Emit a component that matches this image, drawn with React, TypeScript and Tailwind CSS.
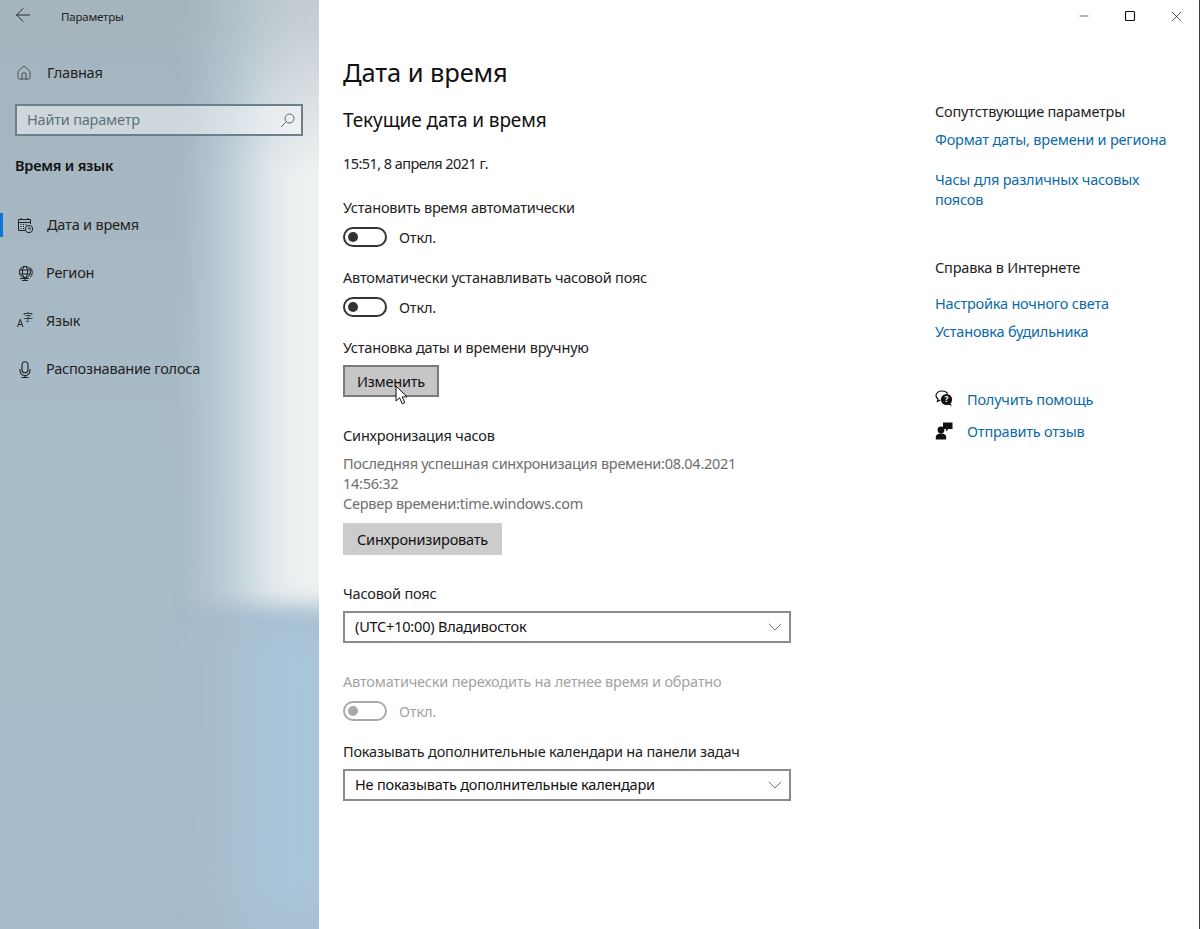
import { ArrowLeft, ChevronDown, Home, Minus, Square, X } from "lucide-react";

const font = "font-['Noto_Sans','Liberation_Sans',sans-serif]";

function Toggle({ disabled = false }: { disabled?: boolean }) {
  return (
    <div className="flex items-center gap-3 h-5">
      <div className={`w-11 h-5 rounded-full border-2 flex items-center pl-[3px] ${disabled ? "border-[#a9a9a9]" : "border-[#333]"}`}>
        <div className={`w-2.5 h-2.5 rounded-full ${disabled ? "bg-[#a9a9a9]" : "bg-[#333]"}`} />
      </div>
      <span className={`text-[14.5px] leading-5 tracking-[-0.2px] ${disabled ? "text-[#a3a3a3]" : "text-[#222]"}`}>Откл.</span>
    </div>
  );
}

function Select({ value }: { value: string }) {
  return (
    <div className="mt-2 w-[448px] h-8 border-2 border-[#8a8a8a] flex items-center justify-between pl-2.5 pr-0.5 text-[#111]">
      <span>{value}</span>
      <ChevronDown size={24} strokeWidth={0.8} className="text-[#555]" />
    </div>
  );
}

function SearchIcon() {
  return (
    <svg width="15" height="15" viewBox="0 0 15 15" fill="none" stroke="#55656e" strokeWidth="1">
      <circle cx="9.5" cy="5.5" r="4.5" />
      <path d="M6.2 8.8L1 14" />
    </svg>
  );
}

function CalendarIcon() {
  return (
    <svg width="17" height="17" viewBox="0 0 17 17" fill="none" stroke="#222" strokeWidth="1">
      <path d="M8 13.5H1.5V2.5h12V7M1.5 5.5h12M4 1v2M11 1v2" />
      <path d="M3.5 7.5h1M6 7.5h1M8.5 7.5h1M3.5 9.5h1M6 9.5h1M3.5 11.5h1M6 11.5h1" />
      <circle cx="12" cy="12" r="3.7" />
      <path d="M12 9.8V12h2" />
    </svg>
  );
}

function GlobeIcon() {
  return (
    <svg width="17" height="17" viewBox="0 0 17 17" fill="none" stroke="#222" strokeWidth="1">
      <circle cx="8" cy="7" r="5.6" />
      <ellipse cx="8" cy="7" rx="2.6" ry="5.6" />
      <path d="M2.6 5h10.8M2.6 9h10.8M13.2 2.5a7 7 0 0 1 0 10M3 13.5h9M8 13v2.5M5 15.5h6" />
    </svg>
  );
}

function LangIcon() {
  return (
    <div className="relative w-[17px] h-[17px] text-[#222] font-normal">
      <span className="absolute left-0 bottom-[2px] text-[10px] leading-[10px]">A</span>
      <span className="absolute left-[6px] -top-[1px] text-[10px] leading-[10px] font-['Noto_Sans_CJK_SC']">字</span>
    </div>
  );
}

function MicIcon() {
  return (
    <svg width="17" height="17" viewBox="0 0 17 17" fill="none" stroke="#222" strokeWidth="1.1">
      <rect x="5" y="0.8" width="6" height="11" rx="3" />
      <path d="M3 8v1.5a5 5 0 0 0 10 0V8M8 14.5v2M4.5 16.5h7" />
    </svg>
  );
}

function HelpIcon() {
  return (
    <svg width="18" height="18" viewBox="0 0 18 18">
      <path d="M7 1C3.4 1 1 3.1 1 5.6c0 1.4.8 2.6 2 3.4L2.4 11.4 5.6 10" fill="none" stroke="#111" strokeWidth="1.2" />
      <path d="M7 1c2.6 0 4.6 1 5.6 2.6" fill="none" stroke="#111" strokeWidth="1.2" />
      <circle cx="11.5" cy="9.5" r="5.6" fill="#111" />
      <path d="M15 13l2 3-4-1.4z" fill="#111" />
      <text x="11.5" y="12.4" textAnchor="middle" fontSize="8.5" fontWeight="700" fill="#fff">?</text>
    </svg>
  );
}

function FeedbackIcon() {
  return (
    <svg width="18" height="18" viewBox="0 0 18 18" fill="#111">
      <path d="M8 0.5h9.5V7H13.5L11 9.5V7H8z" />
      <circle cx="6" cy="8" r="3.4" />
      <path d="M0.8 17.5v-2.5c0-2.4 2-3.6 5.2-3.6s5.2 1.2 5.2 3.6v2.5z" />
    </svg>
  );
}

const navItems = [
  { label: "Дата и время", icon: <CalendarIcon />, active: true },
  { label: "Регион", icon: <GlobeIcon /> },
  { label: "Язык", icon: <LangIcon /> },
  { label: "Распознавание голоса", icon: <MicIcon /> },
];

function Sidebar() {
  return (
    <aside className="relative w-[319px] shrink-0 h-full overflow-hidden bg-[linear-gradient(180deg,#a5b4bd_0%,#a8bbc8_45%,#a7bccb_100%)]">
      {/* blurred wallpaper glow */}
      <div className="absolute left-[240px] top-[610px] w-[120px] h-[320px] bg-[#a9c5da] blur-[30px]" />
      <div className="absolute left-[170px] -top-[40px] w-[220px] h-[760px] [mask-image:linear-gradient(to_bottom,rgba(0,0,0,0.35),rgba(0,0,0,0.45)_9%,rgba(0,0,0,0.7)_18%,black_28%)]">
        <div className="h-[645px] bg-[linear-gradient(to_right,transparent_5%,#bccfd8_28%,#dfe7ea_44%,#eef1f1_60%)] blur-[10px]" />
      </div>

      <div className="relative flex flex-col">
        <div className="h-8 flex items-center pl-3">
          <ArrowLeft size={22} strokeWidth={0.9} className="text-[#111] -mt-[2px]" />
          <span className="ml-[27px] mt-[2px] text-[11.5px] text-[#222]">Параметры</span>
        </div>
        <div className="mt-[25px] h-8 flex items-center pl-4 text-[#222]">
          <Home size={16} strokeWidth={1} />
          <span className="ml-[15px]">Главная</span>
        </div>
        <div className="mt-[15px] ml-[15px] w-[288px] h-8 border-2 border-[#6d7f8a] bg-white/45 flex items-center justify-between pl-2.5 pr-[6px] text-[#5f6f78]">
          <span>Найти параметр</span>
          <SearchIcon />
        </div>
        <div className="mt-[19px] pl-[15px] leading-5 h-5 font-semibold text-[#111]">Время и язык</div>
        <div className="mt-[26px] flex flex-col">
          {navItems.map((item) => (
            <div key={item.label} className="relative h-12 flex items-center pl-[17px] text-[#222]">
              {item.active && <div className="absolute left-0 top-3 w-[3px] h-6 bg-[#0a78d4]" />}
              {item.icon}
              <span className={item.active ? "ml-[13px]" : "ml-3"}>{item.label}</span>
            </div>
          ))}
        </div>
      </div>
    </aside>
  );
}

function Main() {
  return (
    <main className="w-[616px] pl-6 pt-[52px] shrink-0 flex flex-col text-[#222]">
      <h1 className="text-[25.5px] leading-10 tracking-[-0.1px] text-[#111]">Дата и время</h1>
      <h2 className="mt-3.5 text-[19px] leading-7 tracking-[-0.1px] text-[#111]">Текущие дата и время</h2>
      <div className="mt-[19px] leading-5 tracking-[-0.55px]">15:51, 8 апреля 2021 г.</div>

      <div className="mt-6 leading-5">Установить время автоматически</div>
      <div className="mt-2.5"><Toggle /></div>

      <div className="mt-5 leading-5">Автоматически устанавливать часовой пояс</div>
      <div className="mt-2.5"><Toggle /></div>

      <div className="mt-5 leading-5">Установка даты и времени вручную</div>
      <button className="mt-2 w-24 h-8 pt-0.5 bg-[#c6c6c6] border-2 border-[#7a7a7a] text-[#111]">Изменить</button>

      <div className="mt-7 leading-5">Синхронизация часов</div>
      <div className="mt-2 w-[420px] leading-5 tracking-[-0.27px] text-[#6e6e6e]">
        Последняя успешная синхронизация времени:08.04.2021 14:56:32
        <br />
        Сервер времени:time.windows.com
      </div>
      <button className="mt-2.5 w-[159px] h-8 pt-0.5 bg-[#cccccc] text-[#111]">Синхронизировать</button>

      <div className="mt-7 leading-5">Часовой пояс</div>
      <Select value="(UTC+10:00) Владивосток" />

      <div className="mt-7 leading-5 text-[#a3a3a3]">Автоматически переходить на летнее время и обратно</div>
      <div className="mt-2.5"><Toggle disabled /></div>

      <div className="mt-5 leading-5">Показывать дополнительные календари на панели задач</div>
      <Select value="Не показывать дополнительные календари" />
    </main>
  );
}

function WindowControls() {
  return (
    <div className="h-8 flex justify-end text-[#111]">
      <div className="w-[46px] flex items-center justify-center"><Minus size={14} strokeWidth={1} /></div>
      <div className="w-[46px] flex items-center justify-center"><Square size={12} strokeWidth={1.2} absoluteStrokeWidth /></div>
      <div className="w-[46px] flex items-center justify-center"><X size={17} strokeWidth={1} /></div>
    </div>
  );
}

function RightColumn() {
  const link = "leading-5 text-[#0b6aa8]";
  return (
    <div className="flex-1 flex flex-col text-[#222]">
      <WindowControls />
      <div className="mt-[69px] leading-5">Сопутствующие параметры</div>
      <div className={`mt-2 ${link}`}>Формат даты, времени и региона</div>
      <div className={`mt-5 w-[240px] ${link}`}>Часы для различных часовых поясов</div>
      <div className="mt-12 leading-5">Справка в Интернете</div>
      <div className={`mt-4 ${link}`}>Настройка ночного света</div>
      <div className={`mt-2 ${link}`}>Установка будильника</div>
      <div className="mt-12 flex items-center gap-3.5 leading-5">
        <HelpIcon />
        <span className="text-[#0b6aa8]">Получить помощь</span>
      </div>
      <div className="mt-3 flex items-center gap-3.5 leading-5">
        <FeedbackIcon />
        <span className="text-[#0b6aa8]">Отправить отзыв</span>
      </div>
    </div>
  );
}

export default function App() {
  return (
    <div className={`relative w-[1200px] h-[929px] flex bg-white border-r border-[#3a3f44] overflow-hidden text-[14.5px] tracking-[-0.2px] ${font}`}>
      <Sidebar />
      <Main />
      <RightColumn />
      {/* mouse pointer */}
      <svg className="absolute left-[395px] top-[385px]" width="14" height="21" viewBox="0 0 14 21">
        <path d="M1 1v15l3.6-3.2 2.6 6 2.6-1.1-2.6-5.8H12z" fill="#fff" stroke="#111" strokeWidth="1" />
      </svg>
    </div>
  );
}
